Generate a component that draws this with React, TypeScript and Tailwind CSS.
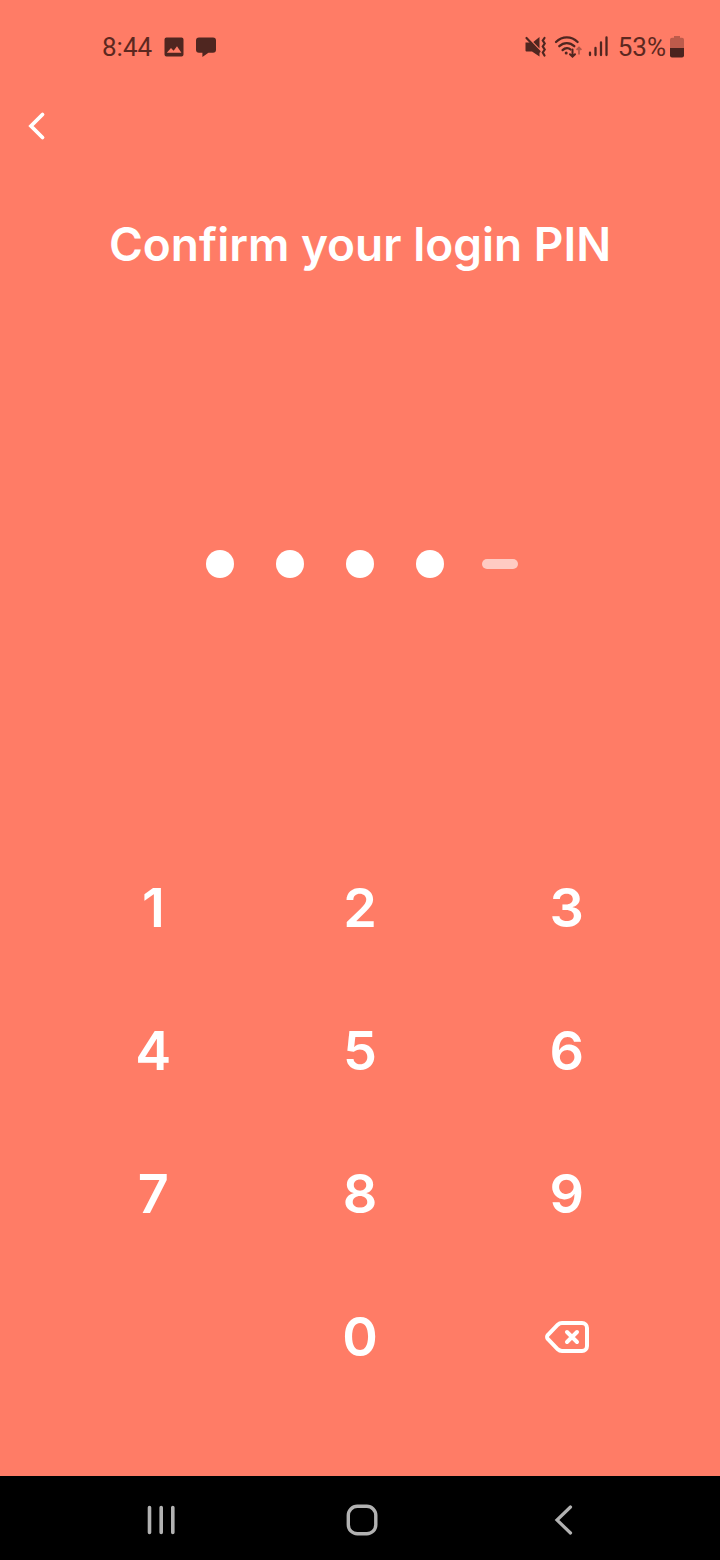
import { useState } from "react";

const PIN_LENGTH = 5;
const DIGITS = ["1", "2", "3", "4", "5", "6", "7", "8", "9"];

function StatusBar() {
  return (
    <header className="flex h-[94px] items-center justify-between pl-[102px] pr-9 font-[Roboto,sans-serif] text-[26px] leading-8 text-[#5c2820]">
      <div className="flex items-center gap-3">
        <span>8:44</span>
        <svg className="h-5 w-5 text-[#4f2620]" viewBox="0 0 20 20" aria-hidden="true">
          <path
            fill="currentColor"
            fillRule="evenodd"
            d="M2.5 0.5h15a2 2 0 0 1 2 2v15a2 2 0 0 1-2 2h-15a2 2 0 0 1-2-2v-15a2 2 0 0 1 2-2zM2.8 15.8h14.6L13 9.2l-3.4 4.6-2.6-2.8z"
          />
        </svg>
        <svg className="h-5 w-5 text-[#4f2620]" viewBox="0 0 20 20" aria-hidden="true">
          <path
            fill="currentColor"
            d="M3 0.5h14a3 3 0 0 1 3 3v9.3a3 3 0 0 1-3 3h-4.6L6.4 20v-4.2H3a3 3 0 0 1-3-3V3.5a3 3 0 0 1 3-3z"
          />
        </svg>
      </div>
      <div className="flex items-center gap-1.5">
        <svg className="h-6 w-6 text-[#4f2620]" viewBox="0 0 24 24" aria-hidden="true">
          <path fill="currentColor" d="M1.5 7.5h5L15.5 17v4.5L8 16.5H2.5a1 1 0 0 1-1-1z" />
          <path fill="currentColor" d="M9.3 7L15.5 2v11.5z" />
          <path stroke="currentColor" strokeWidth="2.2" strokeLinecap="round" d="M2.5 3L15.5 16.5" />
          <path
            fill="none"
            stroke="currentColor"
            strokeWidth="2.2"
            strokeLinecap="round"
            d="M20.5 3l-1.7 2.5 1.9 3-1.9 3 1.9 3-1.9 3 1.7 3"
          />
        </svg>
        <svg className="h-6 w-7 text-[#4f2620]" viewBox="0 0 28 24" fill="none" aria-hidden="true">
          <g stroke="currentColor" strokeWidth="2.3" strokeLinecap="round">
            <path d="M2 7c6.2-6.2 15.4-6.2 21.6 0" />
            <path d="M5.3 11.2c4.4-4.2 10.6-4.2 15 0" />
            <path d="M8.6 15.1c2.6-2.4 6-2.4 8-.6" />
            <path d="M18.5 14.5v7M16 19.2l2.5 2.5 2.5-2.5" strokeWidth="2" />
          </g>
          <circle cx="12.2" cy="18" r="1.5" fill="currentColor" />
          <path
            d="M25 19.5v-7M22.6 14.8L25 12.4l2.4 2.4"
            stroke="currentColor"
            strokeWidth="1.8"
            opacity="0.45"
          />
        </svg>
        <svg className="h-6 w-6 text-[#4f2620]" viewBox="0 0 24 24" aria-hidden="true">
          <path
            stroke="currentColor"
            strokeWidth="2.3"
            strokeLinecap="round"
            d="M2 17.7v2.3M7.5 13v7M13 7.5v12.5M18.5 2.5v17.5"
          />
        </svg>
        <div className="flex items-center gap-1">
          <span>53%</span>
          <svg className="h-[22px] w-3.5" viewBox="0 0 14 22" aria-hidden="true">
            <path
              fill="#bd5b4b"
              d="M4 0h6v1.8h2a2 2 0 0 1 2 2V12H0V3.8a2 2 0 0 1 2-2h2z"
            />
            <path fill="#4a231e" d="M0 12h14v7.5a2 2 0 0 1-2 2H2a2 2 0 0 1-2-2z" />
          </svg>
        </div>
      </div>
    </header>
  );
}

function PinIndicator({ filled }: { filled: number }) {
  return (
    <div className="flex" role="status" aria-label={`${filled} / ${PIN_LENGTH}`}>
      {Array.from({ length: PIN_LENGTH }, (_, i) => (
        <span key={i} className="flex h-7 w-[70px] items-center justify-center">
          {i < filled ? (
            <span className="h-7 w-7 rounded-full bg-white" />
          ) : (
            <span className="h-2.5 w-9 rounded-full bg-[#ffcbc3]" />
          )}
        </span>
      ))}
    </div>
  );
}

function Keypad({ onDigit, onDelete }: { onDigit: () => void; onDelete: () => void }) {
  return (
    <div className="grid auto-rows-[143px] grid-cols-3 px-[50px] pb-[68px] text-[54px] font-semibold leading-none">
      {DIGITS.map((digit) => (
        <button key={digit} type="button" onClick={onDigit}>
          {digit}
        </button>
      ))}
      <button type="button" className="col-start-2" onClick={onDigit}>
        0
      </button>
      <button
        type="button"
        aria-label="Delete"
        className="flex items-center justify-center"
        onClick={onDelete}
      >
        <svg className="h-[34px] w-11" viewBox="0 0 44 34" fill="none" aria-hidden="true">
          <path
            stroke="currentColor"
            strokeWidth="4"
            strokeLinejoin="round"
            d="M17 3H37a5 5 0 0 1 5 5v18a5 5 0 0 1-5 5H17a6 6 0 0 1-4.2-1.7L3 19.2a3 3 0 0 1 0-4.4L12.8 4.7A6 6 0 0 1 17 3z"
          />
          <path
            stroke="currentColor"
            strokeWidth="4"
            strokeLinecap="round"
            d="M22 12l10 10M32 12L22 22"
          />
        </svg>
      </button>
    </div>
  );
}

function NavigationBar() {
  return (
    <nav className="grid h-[84px] grid-cols-3 bg-black pl-[60px] pr-[55px] pt-1 text-[#b2b2b2]">
      <button type="button" aria-label="Recent apps" className="flex items-center justify-center">
        <svg className="h-8 w-8" viewBox="0 0 32 32" aria-hidden="true">
          <path
            stroke="currentColor"
            strokeWidth="3.6"
            strokeLinecap="round"
            d="M4.5 3.5v25M16.2 3.5v25M27.8 3.5v25"
          />
        </svg>
      </button>
      <button type="button" aria-label="Home" className="flex items-center justify-center">
        <svg className="h-8 w-8" viewBox="0 0 32 32" fill="none" aria-hidden="true">
          <rect x="2.3" y="2.3" width="27.5" height="27.5" rx="9" stroke="currentColor" strokeWidth="3.4" />
        </svg>
      </button>
      <button type="button" aria-label="Back" className="flex items-center justify-center">
        <svg className="h-8 w-8" viewBox="0 0 32 32" fill="none" aria-hidden="true">
          <path
            stroke="currentColor"
            strokeWidth="3.2"
            strokeLinecap="round"
            d="M22.5 3L9 16l13.5 13"
          />
        </svg>
      </button>
    </nav>
  );
}

export default function App() {
  const [filled, setFilled] = useState(4);

  return (
    <div className="flex min-h-screen flex-col bg-[#ff7c66] font-[Inter,sans-serif] text-white">
      <StatusBar />
      <main className="flex flex-1 flex-col">
        <div className="flex h-16 items-center px-5">
          <button type="button" aria-label="Go back">
            <svg className="h-8 w-8" viewBox="0 0 32 32" fill="none" aria-hidden="true">
              <path
                stroke="currentColor"
                strokeWidth="3.8"
                strokeLinecap="round"
                d="M22.5 4.5L11 16l11.500 11.500"
              />
            </svg>
          </button>
        </div>
        <h1 className="pb-5 pt-[58px] text-center text-[46px] font-semibold leading-14">
          Confirm your login PIN
        </h1>
        <div className="flex flex-1 items-center justify-center">
          <PinIndicator filled={filled} />
        </div>
        <Keypad
          onDigit={() => setFilled((n) => Math.min(PIN_LENGTH, n + 1))}
          onDelete={() => setFilled((n) => Math.max(0, n - 1))}
        />
      </main>
      <NavigationBar />
    </div>
  );
}
